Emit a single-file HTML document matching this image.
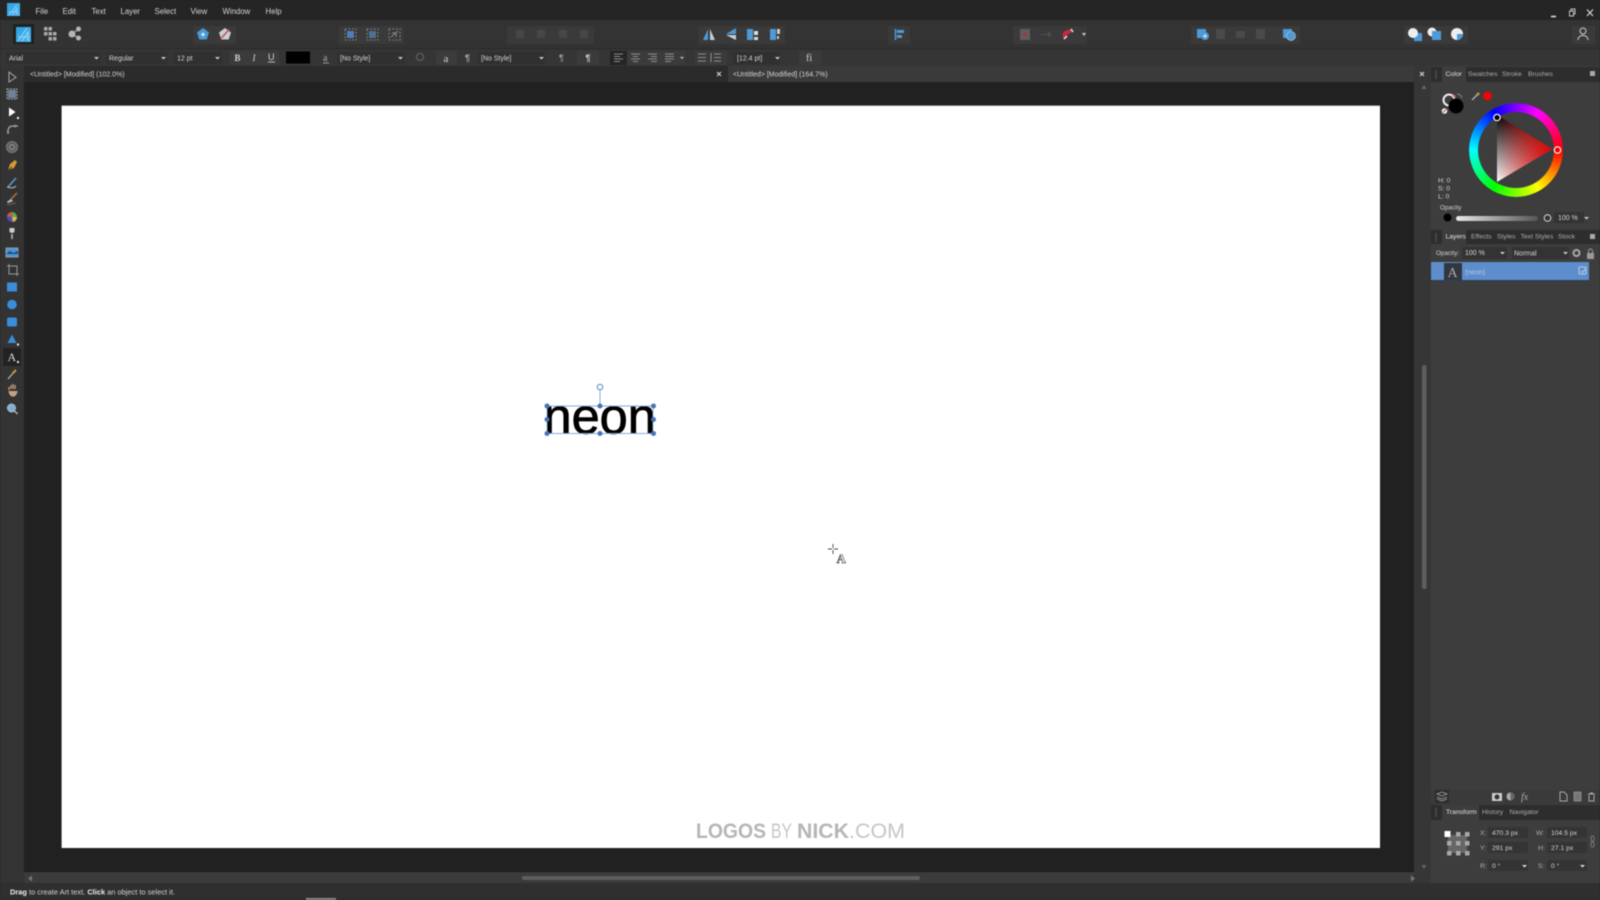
<!DOCTYPE html>
<html><head><meta charset="utf-8"><title>Affinity Designer</title>
<style>
html,body{margin:0;padding:0;width:1600px;height:900px;overflow:hidden;background:#222}
#w{position:absolute;left:0;top:0;width:1600px;height:900px;filter:blur(.4px)}
svg{position:absolute;left:0;top:0}
text{font-family:"Liberation Sans",sans-serif;font-size:7px}
text:not([fill]){fill:#d4d4d4}
text.d,.d text{fill:#d4d4d4}
text.m,.m text{fill:#adadad}
.mn text{font-size:7.8px}
.p{font-size:6.8px}
.wheel{position:absolute;left:1469px;top:103px;width:94px;height:94px;border-radius:50%;background:conic-gradient(from 90deg,#f00,#ff0,#0f0,#0ff,#00f,#f0f,#f00);-webkit-mask:radial-gradient(circle,transparent 37.5px,#000 38.5px);mask:radial-gradient(circle,transparent 37.5px,#000 38.5px)}
</style></head><body><div id="w">
<svg width="1600" height="900" viewBox="0 0 1600 900">
<defs>
<linearGradient id="lg" x1="0" y1="0" x2="1" y2="1"><stop offset="0" stop-color="#2f9fe0"/><stop offset="1" stop-color="#4fb8f0"/></linearGradient>
<linearGradient id="t1" x1="0" y1="0" x2="0" y2="1"><stop offset="0" stop-color="#000"/><stop offset="1" stop-color="#fff"/></linearGradient>
<linearGradient id="t2" x1="0" y1="0" x2="1" y2="0"><stop offset="0" stop-color="#f00" stop-opacity="0"/><stop offset="1" stop-color="#e00000"/></linearGradient>
<linearGradient id="op" x1="0" y1="0" x2="1" y2="0"><stop offset="0" stop-color="#e8e8e8"/><stop offset="1" stop-color="#555"/></linearGradient>
</defs>
<!-- base bars -->
<rect width="1600" height="900" fill="#212121"/>
<rect width="1600" height="20" fill="#252525"/>
<rect y="20" width="1600" height="28" fill="#333"/>
<rect y="48" width="1600" height="1" fill="#2a2a2a"/>
<rect y="49" width="1600" height="17" fill="#353535"/>
<rect y="66" width="24" height="817" fill="#333"/>
<rect x="24" y="66" width="704" height="16" fill="#2b2b2b"/>
<rect x="728" y="66" width="686" height="16" fill="#3a3a3a"/>
<rect x="1414" y="66" width="17" height="817" fill="#363636"/>
<rect x="1431" y="66" width="169" height="817" fill="#3d3d3d"/>
<!-- canvas -->
<rect x="61.500" y="105.500" width="1318.500" height="742.500" fill="#d8d8d8"/>
<rect x="62" y="106.500" width="1318" height="741.500" fill="#fff"/>
<!-- bottom -->
<rect x="24" y="872" width="1390" height="11" fill="#3b3b3b"/>
<rect y="883" width="1600" height="17" fill="#2f2f2f"/>
<rect x="24" y="871" width="1390" height="1" fill="#1b1b1b"/>
<rect x="522" y="876" width="398" height="4" rx="2" fill="#5e5e5e"/>
<path d="M28 878.500l4-3v6zM1415 878.500l-4-3v6z" fill="#777"/>
<rect x="306" y="898" width="30" height="2" fill="#8a8a8a"/>
<text x="10" y="894.500" class="d" style="font-size:7.450px"><tspan font-weight="bold" fill="#eee">Drag</tspan> to create Art text. <tspan font-weight="bold" fill="#eee">Click</tspan> an object to select it.</text>
<!-- menu -->
<rect x="7" y="3" width="13" height="13" fill="url(#lg)"/><path d="M9 15L17 5M12 15L17 8v7M9 12h8" stroke="#8fd8ff" stroke-width=".7" fill="none"/>
<g class="d mn">
<text x="35.500" y="14">File</text><text x="62.500" y="14">Edit</text><text x="91.500" y="14">Text</text><text x="120.500" y="14">Layer</text><text x="154.500" y="14">Select</text><text x="190.500" y="14">View</text><text x="222.500" y="14">Window</text><text x="265.500" y="14">Help</text>
</g>
<path d="M1551 16.500h5" stroke="#ddd" stroke-width="1.600"/><path d="M1569.500 11h4v5h-4zM1571 11v-2h4v5h-1.500" stroke="#ccc" fill="none" stroke-width=".9"/><path d="M1587 9.500l6 6.500M1593 9.500l-6 6.500" stroke="#ddd" stroke-width="1.100"/>
<!-- toolbar -->
<rect x="13" y="24" width="21" height="20" rx="1" fill="#202020"/><rect x="16" y="27" width="15" height="15" fill="url(#lg)"/><path d="M18 41L27 28M22 41L28 32v9M18 37h11" stroke="#9fe0ff" stroke-width=".8" fill="none"/>
<g fill="#a9a9a9"><rect x="44" y="27" width="3.500" height="3.500"/><rect x="48.500" y="27" width="3.500" height="3.500"/><rect x="44" y="32" width="3.500" height="3.500"/><rect x="48.500" y="32" width="3.500" height="3.500"/><rect x="53" y="32" width="3.500" height="3.500"/><rect x="48.500" y="37" width="3.500" height="3.500"/><rect x="53" y="37" width="3.500" height="3.500"/></g>
<g fill="#b5b5b5"><circle cx="72" cy="34" r="3.500"/><circle cx="78.500" cy="29" r="2.500"/><circle cx="78.500" cy="38" r="2.500"/><path d="M72 34L78.500 29M72 34L78.500 38" stroke="#b5b5b5"/></g>
<g fill="#3a3a3a"><rect x="193" y="26" width="43" height="18"/><rect x="339" y="26" width="65" height="18"/><rect x="507" y="26" width="87" height="18"/><rect x="698" y="26" width="87" height="18"/><rect x="888" y="26" width="22" height="18"/><rect x="1013" y="26" width="74" height="18"/><rect x="1191" y="26" width="109" height="18"/><rect x="1404" y="26" width="64" height="18"/><rect x="1572" y="26" width="23" height="18"/></g>
<path d="M203 28l6 4.500-2.300 7h-7.400l-2.300-7z" fill="#4b9ad8"/><path d="M201 34.500h4M203 32.500v4" stroke="#fff"/>
<path d="M225 28l6 4.500-2.300 7h-7.400l-2.300-7z" fill="#c9cfd8"/><path d="M221 38.500l8-9" stroke="#d0504e" stroke-width="1.500"/>
<g fill="none" stroke="#aaa" stroke-dasharray="1.500 2" stroke-width=".8"><rect x="345" y="29" width="11" height="11"/><rect x="367" y="29" width="11" height="11"/><rect x="389" y="29" width="11" height="11"/></g>
<rect x="347" y="31" width="7" height="7" fill="#4e7fb8"/><rect x="369" y="31" width="7" height="7" fill="#4e6f94"/><path d="M391 37l7-6M392 33h4v4" stroke="#888" fill="none"/>
<g fill="#474747"><rect x="516" y="30" width="8" height="8"/><rect x="537" y="30" width="8" height="8"/><rect x="559" y="30" width="8" height="8"/><rect x="580" y="30" width="8" height="8"/></g>
<path d="M703 40l5-11v11z" fill="#4f9ad6"/><path d="M710 40v-11l5 11z" fill="#bcd0e0"/>
<path d="M736 28v6h-10zM736 40v-5h-10z" fill="#4f9ad6"/><path d="M736 35v5l-10-5z" fill="#c4cdd6"/>
<rect x="747" y="29" width="6" height="11" fill="#4f9ad6"/><rect x="754" y="31" width="4" height="4" fill="#ddd"/><rect x="754" y="37" width="4" height="3" fill="#ddd"/>
<rect x="770" y="29" width="6" height="11" fill="#4f9ad6"/><path d="M777 29h3v5h-3zM777 36h2v3h-2z" fill="#ccc"/>
<path d="M895.500 29v11" stroke="#4f9ad6" stroke-width="1.500"/><path d="M897 30h7v3h-7zM897 35h5v3h-5z" fill="#4f9ad6"/>
<rect x="1020" y="29" width="10" height="11" fill="#5e5e5e"/><circle cx="1025" cy="34.500" r="2" fill="#a34"/>
<path d="M1041 34.500h10M1048 32l3 2.500-3 2.500" stroke="#525252" fill="none"/>
<path d="M1064 39a5 5 0 0 1 1-8l5-2 2 3-5 3-2 4z" fill="#c22a44"/><path d="M1064 39l3-3M1071 29l2 3" stroke="#eee" stroke-width="1.400"/><path d="M1082 33h4l-2 3z" fill="#ccc"/>
<rect x="1197" y="29" width="9" height="9" fill="#4f9ad6"/><circle cx="1205" cy="36" r="4" fill="#4f9ad6"/><path d="M1203 36h4M1205 34v4" stroke="#fff" stroke-width=".8"/>
<g fill="#4a4a4a"><rect x="1216" y="29" width="9" height="10"/><rect x="1236" y="31" width="9" height="7"/><rect x="1256" y="29" width="9" height="10"/></g>
<rect x="1283" y="29" width="9" height="9" fill="#4f9ad6"/><circle cx="1291" cy="36" r="4.500" fill="#4f9ad6" stroke="#ccc" stroke-width=".6"/>
<rect x="1414" y="33" width="8" height="8" fill="#4f9ad6"/><circle cx="1413" cy="33" r="5" fill="#eee"/>
<circle cx="1432" cy="32" r="4.500" fill="#eee"/><rect x="1432" y="31" width="9" height="9" fill="#4f9ad6"/>
<circle cx="1457" cy="34" r="6" fill="#eee"/><path d="M1457 34h6a6 6 0 0 1-6 6z" fill="#4f9ad6"/>
<circle cx="1583" cy="31" r="3" fill="none" stroke="#ccc"/><path d="M1578 40c0-6 10-6 10 0" fill="none" stroke="#ccc"/>
<!-- context -->
<g fill="#303030"><rect x="6" y="52" width="95" height="12"/><rect x="106" y="52" width="61" height="12"/><rect x="174" y="52" width="48" height="12"/><rect x="337" y="52" width="68" height="12"/><rect x="478" y="52" width="67" height="12"/><rect x="733" y="52" width="47" height="12"/></g>
<g fill="#3b3b3b"><rect x="230" y="51" width="49" height="14"/><rect x="436" y="51" width="21" height="14"/><rect x="577" y="51" width="22" height="14"/><rect x="610" y="51" width="75" height="14"/><rect x="695" y="51" width="32" height="14"/><rect x="799" y="51" width="22" height="14"/></g>
<text x="9" y="60.500" class="d">Arial</text><text x="109" y="60.500" class="d">Regular</text><text x="177" y="60.500" class="d">12 pt</text><text x="340" y="60.500" class="d">[No Style]</text><text x="481" y="60.500" class="d">[No Style]</text><text x="737" y="60.500" class="d">[12.4 pt]</text>
<path d="M94 57h5l-2.500 2.500zM161 57h5l-2.500 2.500zM215 57h5l-2.500 2.500zM398 57h5l-2.500 2.500zM539 57h5l-2.500 2.500zM775 57h5l-2.500 2.500zM680 57h4l-2 2z" fill="#ccc"/>
<text x="234.500" y="61" font-weight="bold" style="font-size:9px;font-family:'Liberation Serif',serif" class="d">B</text><text x="252.500" y="61" font-style="italic" style="font-size:9px;font-family:'Liberation Serif',serif" class="d">I</text><text x="268" y="60" style="font-size:9px" class="d">U</text><path d="M268 62h7" stroke="#bbb"/>
<rect x="286" y="51.500" width="24" height="12" fill="#000"/>
<text x="323" y="61" style="font-size:10px;font-family:'Liberation Serif',serif" class="m">a</text><path d="M323 63h6" stroke="#999"/>
<circle cx="420" cy="57" r="3.500" fill="none" stroke="#666"/>
<text x="443.500" y="62" style="font-size:11px;font-family:'Liberation Serif',serif" class="d">a</text>
<text x="465" y="61" font-weight="bold" style="font-size:9px" class="m">¶</text><text x="559" y="61" style="font-size:9px" class="m">¶</text><text x="585.500" y="61" font-weight="bold" style="font-size:9px" class="d">¶</text>
<rect x="610" y="51" width="17" height="14" fill="#252525"/>
<path d="M614 54h9M614 56.500h6M614 59h9M614 61.500h6M631 54h9M633 56.500h5M631 59h9M633 61.500h5M648 54h9M651 56.500h6M648 59h9M651 61.500h6M665 54h9M665 56.500h9M665 59h9M665 61.500h6M698 54h8M698 57.500h8M698 61h8M714 54h7M714 57.500h7M714 61h7" stroke="#aaa" stroke-width=".8"/>
<path d="M711 53v9" stroke="#aaa" stroke-width=".8"/>
<text x="806" y="61" style="font-size:10px;font-family:'Liberation Serif',serif" class="d">fi</text>
<!-- tabs -->
<text x="30" y="76.500" class="d">&lt;Untitled&gt; [Modified] (102.0%)</text>
<text x="733" y="76.500" class="d">&lt;Untitled&gt; [Modified] (164.7%)</text>
<path d="M717 72l4 4M721 72l-4 4M1420 72l4 4M1424 72l-4 4" stroke="#ddd"/>
<!-- v scrollbar -->
<path d="M1424 85l-2.500 4h5z" fill="#666"/><path d="M1424 869l-2.500-4h5z" fill="#666"/>
<rect x="1422" y="365" width="4.500" height="224" rx="2" fill="#5e5e5e"/>
<!-- tools -->
<rect x="3" y="348" width="18" height="18" fill="#222"/>
<path d="M9 72v10l3-2 4-2.500z" fill="none" stroke="#aaa"/>
<rect x="8" y="90" width="8" height="8" fill="#6f8296"/><rect x="7" y="89" width="10" height="10" fill="none" stroke="#aaa" stroke-dasharray="2 1"/>
<path d="M9 107.500v9l3-2 3.500-2.500z" fill="#fff"/><rect x="17" y="117" width="2" height="2" fill="#fff"/>
<path d="M8 134v-3q0-5 5-5h5" fill="none" stroke="#aaa" stroke-width="1.200"/><circle cx="8" cy="132" r="1.300" fill="#88a"/><circle cx="15" cy="126" r="1.300" fill="#89b"/>
<circle cx="12" cy="147" r="5.500" fill="#5a5a5a" stroke="#808080" stroke-width="1"/><circle cx="12" cy="147" r="2.500" fill="none" stroke="#999"/>
<path d="M8 170l2-6 5-4 2 2-3 6z" fill="#d89a30"/><path d="M8 170l4-3" stroke="#444"/>
<path d="M8 187l8-9" stroke="#5a9ad8" stroke-width="1.600"/><path d="M7 187q6 2 9-1" stroke="#bbb" fill="none"/>
<path d="M11 199l6-6" stroke="#b06a30" stroke-width="1.600"/><path d="M7 202l4-3 2 2-5 2zM7 205l9-2" fill="#bbb" stroke="#999" stroke-width=".5"/>
<circle cx="12" cy="217" r="5" fill="#666"/><path d="M12 217l-5-1a5 5 0 0 1 5-4z" fill="#c54"/><path d="M12 217v-5a5 5 0 0 1 5 5z" fill="#5a5"/><path d="M12 217h5a5 5 0 0 1-4 5z" fill="#db4"/><path d="M12 217v5a5 5 0 0 1-5-5z" fill="#54c"/>
<path d="M9.500 228h5v4q-2.500 2-5 0z" fill="#ccc"/><path d="M12 234v5" stroke="#bbb" stroke-width="1.500"/>
<rect x="6" y="248" width="12" height="9" fill="#4d93d3" stroke="#aaa" stroke-width=".8"/><path d="M6 254l4-3 3 2 5-2v3H6z" fill="#1d4d80"/>
<path d="M9 264v10h10M7 266h10v10" fill="none" stroke="#999"/>
<rect x="7" y="282.500" width="10" height="9" fill="#3a8dd8"/>
<circle cx="12" cy="304.500" r="4.800" fill="#3a8dd8"/>
<rect x="7" y="317.500" width="10" height="9" rx="2" fill="#3a8dd8"/>
<path d="M12 334.500l4.500 8.500h-9z" fill="#3a8dd8"/><rect x="17" y="343.500" width="2" height="2" fill="#eee"/>
<text x="7.500" y="361" style="font-size:12px;font-family:'Liberation Serif',serif" fill="#ddd">A</text><rect x="17" y="361" width="2" height="2" fill="#eee"/>
<path d="M8 379l6-7" stroke="#bbb" stroke-width="1.200"/><path d="M13 373l3-3" stroke="#d09a30" stroke-width="2"/>
<path d="M9 390v-3M11 389v-4M13 389v-5M15 389v-4M9 391q1 5 4 5 3 0 4-5" stroke="#c8a080" stroke-width="1.300" fill="#c8a080"/>
<circle cx="11.500" cy="408" r="4" fill="#7ab0dc" stroke="#bbb"/><path d="M14.500 411l3 3" stroke="#bbb" stroke-width="1.300"/>
<!-- neon text -->
<text x="543.500" y="433.500" style="font-size:50.500px;font-family:'Liberation Sans',sans-serif" fill="#000" stroke="#000" stroke-width=".8">neon</text>
<rect x="547" y="406" width="106" height="27.500" fill="none" stroke="#8cabd8" stroke-width="1"/>
<path d="M600 390v16" stroke="#8cabd8"/><circle cx="600" cy="387" r="2.800" fill="#fff" stroke="#5b8bbf"/>
<g fill="#4574b5"><circle cx="547" cy="406" r="2.500"/><circle cx="600" cy="406" r="2.500"/><circle cx="653.500" cy="406" r="2.500"/><circle cx="547" cy="419.500" r="2.500"/><circle cx="653.500" cy="419.500" r="2.500"/><circle cx="547" cy="433.500" r="2.500"/><circle cx="600" cy="433.500" r="2.500"/><circle cx="653.500" cy="433.500" r="2.500"/></g>
<!-- cursor -->
<path d="M828 549h4M834 549h4M833 544v4M833 550v4" stroke="#444" stroke-width=".9"/>
<text x="836.500" y="563" style="font-size:13px;font-family:'Liberation Serif',serif;font-weight:bold" fill="#fff" stroke="#444" stroke-width=".6">A</text>
<!-- watermark -->
<text x="696" y="838" style="font-size:21px;font-weight:bold" fill="#b6b6b6" textLength="70" lengthAdjust="spacingAndGlyphs">LOGOS</text>
<text x="771" y="838" style="font-size:21px" fill="#c6c6c6" textLength="21" lengthAdjust="spacingAndGlyphs">BY</text>
<text x="797" y="838" style="font-size:21px;font-weight:bold" fill="#b6b6b6" textLength="52" lengthAdjust="spacingAndGlyphs">NICK</text>
<text x="849" y="838" style="font-size:21px" fill="#c6c6c6" textLength="56" lengthAdjust="spacingAndGlyphs">.COM</text>
<!-- panel: colour -->
<rect x="1431" y="67" width="169" height="15" fill="#2d2d2d"/><rect x="1442" y="67" width="24" height="15" fill="#3d3d3d"/>
<text x="1445.500" y="76" fill="#e4e4e4" class="p">Color</text><text x="1468" y="76" class="m p">Swatches</text><text x="1502" y="76" class="m p">Stroke</text><text x="1528" y="76" class="m p">Brushes</text>
<rect x="1435" y="70" width="2" height="9" fill="#444"/><rect x="1590" y="71" width="5" height="5" fill="#aaa"/>
<circle cx="1449" cy="100" r="5.500" fill="none" stroke="#eee" stroke-width="2"/><path d="M1453 95a6 6 0 0 1 2 2" stroke="#d66" stroke-width="2" fill="none"/><circle cx="1456" cy="106" r="7.500" fill="#000"/><circle cx="1444.500" cy="111" r="2.800" fill="#eee"/><path d="M1443 112.500l3-3" stroke="#d44"/><path d="M1457 94a5 5 0 0 1 5 4" stroke="#888" fill="none"/>
<path d="M1472 100l6-6" stroke="#aaa" stroke-width="1.500"/><path d="M1477 95l2-2" stroke="#c93" stroke-width="2.500"/><circle cx="1487.500" cy="96" r="4.200" fill="#f00"/>
<polygon points="1497,115 1552,149 1497,182" fill="url(#t1)"/><polygon points="1497,115 1552,149 1497,182" fill="url(#t2)"/>
<text x="1438" y="182.500" class="d p">H: 0</text><text x="1438" y="190.500" class="d p">S: 0</text><text x="1438" y="198.500" class="d p">L: 0</text><text x="1440" y="209.500" class="d" style="font-size:6.300px">Opacity</text>
<circle cx="1447.500" cy="217.500" r="4" fill="#000"/>
<rect x="1456" y="216" width="82" height="5" rx="2.500" fill="url(#op)"/><circle cx="1547.500" cy="218" r="3.300" fill="#333" stroke="#ddd"/>
<rect x="1554" y="212" width="30" height="11" fill="#333"/><text x="1558" y="220" class="d">100 %</text><path d="M1584 217h5l-2.500 2.500z" fill="#ccc"/>
<!-- panel: layers -->
<rect x="1431" y="230" width="169" height="14" fill="#2d2d2d"/><rect x="1442" y="230" width="24" height="14" fill="#3d3d3d"/>
<text x="1445.500" y="238.500" fill="#e4e4e4" class="p">Layers</text><text x="1471" y="238.500" class="m p">Effects</text><text x="1497" y="238.500" class="m p">Styles</text><text x="1520.500" y="238.500" class="m p">Text Styles</text><text x="1558" y="238.500" class="m p">Stock</text>
<rect x="1435" y="233" width="2" height="9" fill="#444"/><rect x="1590" y="234" width="5" height="5" fill="#aaa"/>
<text x="1436" y="255" class="d" style="font-size:6.300px">Opacity:</text>
<rect x="1462" y="247" width="45" height="12" fill="#333"/><text x="1465" y="255" class="d">100 %</text><path d="M1500 252h5l-2.500 2.500z" fill="#ccc"/>
<rect x="1512" y="247" width="57" height="12" fill="#333"/><text x="1514" y="255.500" class="d">Normal</text><path d="M1563 252h5l-2.500 2.500z" fill="#ccc"/>
<circle cx="1576.500" cy="253" r="3" fill="none" stroke="#aaa" stroke-width="2"/><rect x="1587" y="253" width="7" height="6" fill="#999"/><path d="M1588.500 253v-2a2 2 0 0 1 4 0v2" fill="none" stroke="#999"/>
<rect x="1431" y="262" width="158" height="18" fill="#5d8dcb"/><rect x="1431" y="280" width="158" height="1" fill="#2b3f5c"/>
<rect x="1444" y="263" width="18" height="17" fill="#32373f"/><text x="1447.500" y="277" style="font-size:14px;font-family:'Liberation Serif',serif" fill="#aaa">A</text>
<text x="1465" y="274.500" fill="#b6cce8">(neon)</text>
<rect x="1579" y="267" width="7" height="7" rx="1" fill="none" stroke="#b6cce8"/><path d="M1581 271l1.500 1.500 3.500-4" stroke="#b6cce8" fill="none"/>
<!-- layers footer -->
<rect x="1431" y="790" width="169" height="15" fill="#3a3a3a"/>
<rect x="1435" y="790" width="14" height="13" fill="#2d2d2d"/><path d="M1437 794l5-2 5 2-5 2zM1437 797l5 2 5-2M1437 799l5 2 5-2" fill="none" stroke="#aaa" stroke-width=".8"/>
<rect x="1492" y="793" width="10" height="8" fill="#ccc"/><circle cx="1497" cy="797" r="2.500" fill="#333"/>
<circle cx="1510.500" cy="796.500" r="4" fill="#aaa"/><path d="M1510.500 792.500a4 4 0 0 1 0 8z" fill="#666"/>
<text x="1521" y="800" style="font-size:10px;font-family:'Liberation Serif',serif;font-style:italic" class="m">fx</text>
<path d="M1560 792h4l3 3v6h-7z" fill="none" stroke="#aaa"/><rect x="1574" y="792" width="7" height="9" fill="#777" stroke="#aaa" stroke-width=".6"/><path d="M1588 794h7M1589 795v6h5v-6M1590 793h3" fill="none" stroke="#aaa"/>
<!-- transform -->
<rect x="1431" y="805" width="169" height="15" fill="#2d2d2d"/><rect x="1442" y="805" width="37" height="15" fill="#3d3d3d"/>
<text x="1446" y="814" fill="#e4e4e4" class="p">Transform</text><text x="1482" y="814" class="m p">History</text><text x="1509.500" y="814" class="m p">Navigator</text>
<rect x="1435" y="808" width="2" height="9" fill="#444"/>
<rect x="1448" y="835" width="19" height="18" fill="#666"/>
<g fill="#a8a8a8"><rect x="1456" y="832" width="4.500" height="4.500"/><rect x="1465" y="832" width="4.500" height="4.500"/><rect x="1447" y="841" width="4.500" height="4.500"/><rect x="1456" y="841" width="4.500" height="4.500"/><rect x="1465" y="841" width="4.500" height="4.500"/><rect x="1447" y="851" width="4.500" height="4.500"/><rect x="1456" y="851" width="4.500" height="4.500"/><rect x="1465" y="851" width="4.500" height="4.500"/></g>
<rect x="1444.500" y="831" width="6" height="6" fill="#fff"/>
<g fill="#343434"><rect x="1488" y="827" width="40" height="11"/><rect x="1488" y="842" width="40" height="11"/><rect x="1488" y="860" width="40" height="11"/><rect x="1547" y="827" width="40" height="11"/><rect x="1547" y="842" width="40" height="11"/><rect x="1547" y="860" width="40" height="11"/></g>
<text x="1480" y="835" class="m p">X:</text><text x="1492" y="835" class="d p">470.3 px</text>
<text x="1480" y="850" class="m p">Y:</text><text x="1492" y="850" class="d p">291 px</text>
<text x="1480" y="868" class="m p">R:</text><text x="1492" y="868" class="d p">0 °</text>
<text x="1536" y="835" class="m p">W:</text><text x="1551" y="835" class="d p">104.5 px</text>
<text x="1538" y="850" class="m p">H:</text><text x="1551" y="850" class="d p">27.1 px</text>
<text x="1538" y="868" class="m p">S:</text><text x="1551" y="868" class="d p">0 °</text>
<path d="M1522 865h5l-2.500 2.500zM1580 865h5l-2.500 2.500z" fill="#ddd"/>
<rect x="1591" y="836" width="3" height="5" rx="1.500" fill="none" stroke="#777"/><rect x="1591" y="842" width="3" height="5" rx="1.500" fill="none" stroke="#777"/>
</svg>
<div class="wheel"></div>
<svg width="1600" height="900" viewBox="0 0 1600 900" style="pointer-events:none">
<circle cx="1497" cy="117.500" r="3.200" fill="#000" stroke="#fff" stroke-width="1.200"/>
<circle cx="1557.500" cy="150" r="3.200" fill="#e00" stroke="#fff" stroke-width="1.200"/>
</svg>
</div></body></html>
